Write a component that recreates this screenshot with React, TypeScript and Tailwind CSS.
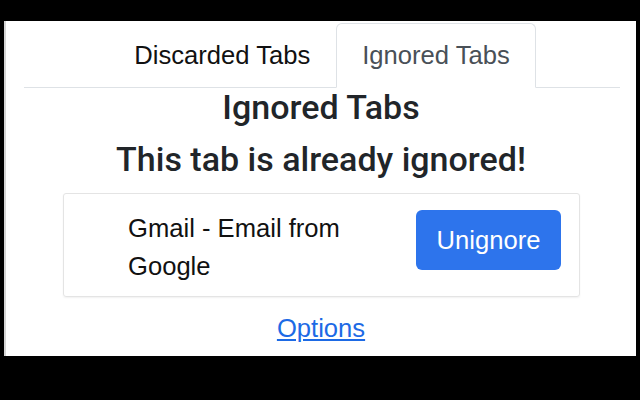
import React from "react";

export default function App() {
  return (
    <div className="w-[640px] h-[400px] bg-black pt-[21px] pl-[4px] pr-[4px]" style={{ fontFamily: '"Liberation Sans", Arial, sans-serif' }}>
      <div className="h-[335px] bg-white border-l-2 border-[#d4d4d4] text-[#212529]">
        <div className="pt-[2px] ml-[18px] mr-[16px]">
          <ul className="flex justify-center border-b border-[#dee2e6]">
            <li>
              <a className="flex items-center h-[64px] px-[25px] border border-transparent text-[25.6px] text-[#111]">Discarded Tabs</a>
            </li>
            <li className="-mb-px">
              <a className="flex items-center h-[65px] px-[25px] border border-[#dee2e6] border-b-white rounded-t-[6px] bg-white text-[25.6px] text-[#495057]">Ignored Tabs</a>
            </li>
          </ul>
        </div>
        <h5 className="text-center text-[34px] leading-[39px] mb-[13px] font-medium" style={{ fontFamily: 'Roboto, "Liberation Sans", sans-serif' }}>Ignored Tabs</h5>
        <h5 className="text-center text-[34px] leading-[39px] mb-[14px] font-medium" style={{ fontFamily: 'Roboto, "Liberation Sans", sans-serif' }}>This tab is already ignored!</h5>
        <div className="ml-[57px] w-[517px] border border-[#e4e4e4] rounded-[3px] shadow-[0_1px_2px_rgba(0,0,0,0.06)] flex items-start pt-[16px] pb-[10px]">
          <div className="ml-[64px] -mt-[1px] w-[240px] text-[25.6px] leading-[38.4px] text-[#111]">Gmail - Email from Google</div>
          <button className="ml-auto mr-[18px] w-[145px] h-[60px] rounded-[6px] bg-[#2d74ec] text-white text-[25.6px] flex items-center justify-center">Unignore</button>
        </div>
        <div className="mt-[12px] text-center">
          <a className="text-[25.6px] leading-[38.4px] underline text-[#1d6ae5]">Options</a>
        </div>
      </div>
    </div>
  );
}
